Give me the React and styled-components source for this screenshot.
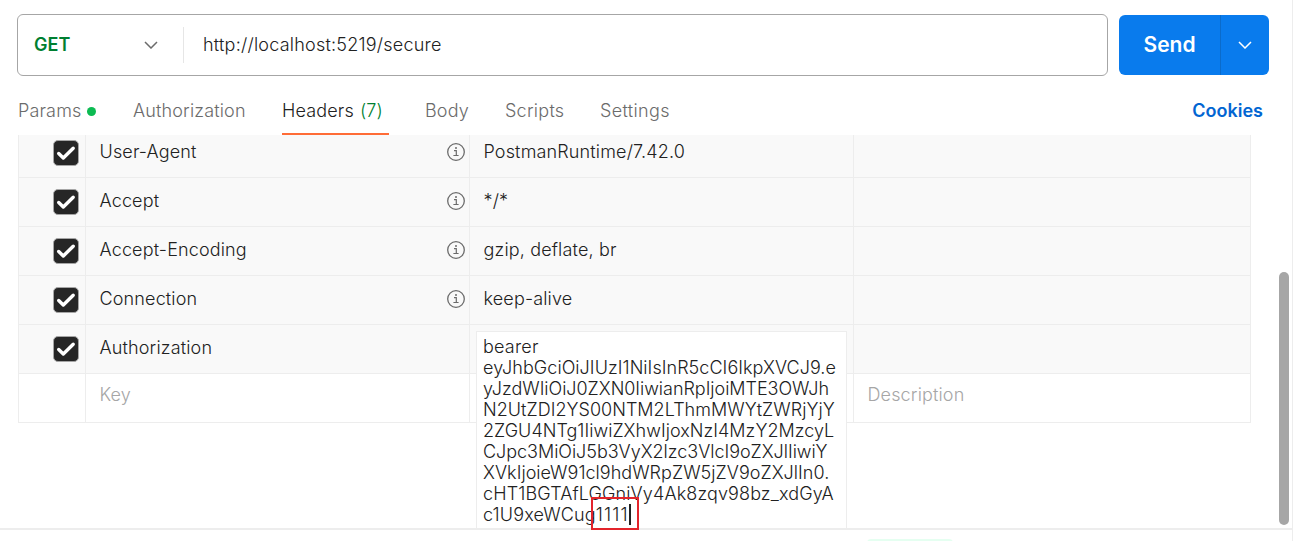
import React from "react";
import styled, { createGlobalStyle } from "styled-components";

const Global = createGlobalStyle`
  * { box-sizing: border-box; }
  body {
    margin: 0;
    background: #fff;
    color: #212121;
    font: 360 18px/24px Inter, "Liberation Sans", sans-serif;
    letter-spacing: 0.15px;
    overflow: hidden;
  }
`;

const Panel = styled.main`
  width: 1293px;
  height: 541px;
  display: flex;
  flex-direction: column;
  border-right: 1px solid #ededed;
  overflow: hidden;
`;

const RequestBar = styled.header`
  display: flex;
  align-items: center;
  gap: 11px;
  padding: 14px 23px 0 17px;
`;

const UrlBox = styled.div`
  display: flex;
  align-items: center;
  width: 1091px;
  height: 62px;
  border: 1px solid #a6a6a6;
  border-radius: 6px;
`;

const Method = styled.div`
  display: flex;
  align-items: center;
  justify-content: space-between;
  width: 166px;
  height: 36px;
  padding: 0 25px 0 16px;
  border-right: 1px solid #e6e6e6;
  color: #007f31;
  font-weight: 600;
  letter-spacing: 0;
`;

const Url = styled.span`
  padding-left: 19px;
  letter-spacing: 0.22px;
`;

const SendGroup = styled.div`
  display: flex;
  width: 150px;
  height: 60px;
  border-radius: 6px;
  background: #097bed;
  color: #fff;
  overflow: hidden;
`;

const SendButton = styled.div`
  display: flex;
  align-items: center;
  justify-content: center;
  width: 102px;
  border-right: 1px solid #0a6bcb;
  font-size: 21px;
  font-weight: 600;
  letter-spacing: 0;
`;

const SendMenu = styled.div`
  display: flex;
  flex: 1;
  align-items: center;
  justify-content: center;
`;

const Tabs = styled.nav`
  display: flex;
  height: 59px;
  flex: none;
  padding: 0 29px 0 18px;
`;

const Tab = styled.div`
  display: flex;
  align-items: center;
  gap: 6px;
  height: 59px;
  padding-top: 13px;
  margin-right: 36px;
  width: ${(p) => p.$width}px;
  white-space: nowrap;
  letter-spacing: ${(p) => p.$tracking ?? 0.15}px;
  color: ${(p) => (p.$active ? "#212121" : "#6b6b6b")};
  border-bottom: 2px solid ${(p) => (p.$active ? "#ff6c37" : "transparent")};
`;

const Count = styled.span`
  color: #007f31;
`;

const Dot = styled.i`
  width: 9px;
  height: 9px;
  border-radius: 50%;
  background: #0cbb52;
`;

const Cookies = styled.a`
  margin-left: auto;
  padding-top: 23px;
  color: #0265d2;
  font-weight: 600;
  letter-spacing: 0;
`;

const Viewport = styled.section`
  position: relative;
  height: 393px;
  flex: none;
  overflow: hidden;
`;

const Table = styled.div`
  width: 1233px;
  margin: -6px 0 0 18px;
  border-left: 1px solid #ededed;
`;

const Row = styled.div`
  display: grid;
  grid-template-columns: 67px 384px 384px 397px;
  height: 49px;
  background: ${(p) => (p.$blank ? "#fff" : "#f9f9f9")};
  color: ${(p) => (p.$blank ? "#a6a6a6" : "#212121")};
`;

const Cell = styled.div`
  display: flex;
  align-items: flex-start;
  justify-content: space-between;
  padding: ${(p) => p.$top || 11}px 4px 0 13.5px;
  border-right: 1px solid #ededed;
  border-bottom: 1px solid #ededed;
`;

const CheckCell = styled(Cell)`
  align-items: center;
  justify-content: flex-end;
  padding: 0 6px 0 0;
`;

const Editor = styled.div`
  position: absolute;
  left: 476px;
  top: 196px;
  width: 371px;
  height: 198px;
  padding: 4px 6px;
  background: #fff;
  border: 1px solid #ededed;
  line-height: 21px;
  white-space: nowrap;
`;

const TokenLine = styled.div`
  letter-spacing: ${(p) => p.$tracking}px;
`;

const Suffix = styled.span`
  letter-spacing: 1.2px;
`;

const Caret = styled.i`
  display: inline-block;
  width: 2px;
  height: 21px;
  vertical-align: top;
  background: #212121;
`;

const Marker = styled.div`
  position: absolute;
  left: 591px;
  top: 362px;
  width: 48px;
  height: 33px;
  border: 2px solid #e3242b;
`;

const Workspace = styled.div`
  position: relative;
`;

const ScrollThumb = styled.div`
  position: absolute;
  right: 3px;
  top: 137px;
  width: 10px;
  height: 253px;
  border-radius: 5px;
  background: #a6a6a6;
`;

const Response = styled.footer`
  height: 13px;
  border-top: 2px solid #ededed;
  padding: 9px 0 0 867px;
`;

const StatusBadge = styled.div`
  width: 86px;
  height: 24px;
  border-radius: 4px;
  background: #e5fff1;
`;

const Chevron = ({ color }) => (
  <svg width="14" height="8" viewBox="0 0 14 8" fill="none" stroke={color} strokeWidth="1.5">
    <path d="M1 1 7 7 13 1" />
  </svg>
);

const InfoIcon = styled.svg`
  margin-top: 3px;
`;

const Info = () => (
  <InfoIcon width="18" height="18" viewBox="0 0 18 18" fill="none">
    <circle cx="9" cy="9" r="8.3" stroke="#6b6b6b" strokeWidth="1.3" />
    <path d="M7 7.7h2.3V12.4M6.4 12.5h5.2" stroke="#6b6b6b" strokeWidth="1.2" />
    <circle cx="9" cy="5.1" r="1" fill="#6b6b6b" />
  </InfoIcon>
);

const Check = () => (
  <svg width="26" height="26" viewBox="0 0 26 26" fill="none">
    <rect x=".5" y=".5" width="25" height="25" rx="4.5" fill="#262626" stroke="#a6a6a6" />
    <path d="M5.7 13.5 10.3 18 20.2 8.3" stroke="#fff" strokeWidth="3.4" strokeLinecap="round" strokeLinejoin="round" />
  </svg>
);

const headers = [
  ["User-Agent", "PostmanRuntime/7.42.0"],
  ["Accept", "*/*"],
  ["Accept-Encoding", "gzip, deflate, br"],
  ["Connection", "keep-alive"],
  ["Authorization", null],
];

const token = [
  ["bearer", 0.2],
  ["eyJhbGciOiJIUzI1NiIsInR5cCI6IkpXVCJ9.e", 0.05],
  ["yJzdWIiOiJ0ZXN0IiwianRpIjoiMTE3OWJh", -0.03],
  ["N2UtZDI2YS00NTM2LThmMWYtZWRjYjY", 0.03],
  ["2ZGU4NTg1IiwiZXhwIjoxNzI4MzY2MzcyL", 0.03],
  ["CJpc3MiOiJ5b3VyX2lzc3VlcI9oZXJlIiwiY", -0.03],
  ["XVkIjoieW91cl9hdWRpZW5jZV9oZXJlIn0.", 0.03],
  ["cHT1BGTAfLGGniVy4Ak8zqv98bz_xdGyA", 0.12],
  ["c1U9xeWCug", 0.15],
];

export default function App() {
  return (
    <>
      <Global />
      <Panel>
        <RequestBar>
          <UrlBox>
            <Method>
              GET
              <Chevron color="#6b6b6b" />
            </Method>
            <Url>http://localhost:5219/secure</Url>
          </UrlBox>
          <SendGroup>
            <SendButton>Send</SendButton>
            <SendMenu>
              <Chevron color="#fff" />
            </SendMenu>
          </SendGroup>
        </RequestBar>
        <Tabs>
          <Tab $width={79}>
            Params <Dot />
          </Tab>
          <Tab $width={113}>Authorization</Tab>
          <Tab $width={107} $active>
            Headers <Count>(7)</Count>
          </Tab>
          <Tab $width={44}>Body</Tab>
          <Tab $width={59} $tracking={0.25}>Scripts</Tab>
          <Tab $width={70} $tracking={0.35}>Settings</Tab>
          <Cookies>Cookies</Cookies>
        </Tabs>
        <Workspace>
          <Viewport>
            <Table>
              {headers.map(([name, value]) => (
                <Row key={name}>
                  <CheckCell>
                    <Check />
                  </CheckCell>
                  <Cell>
                    {name}
                    {value && <Info />}
                  </Cell>
                  <Cell>{value}</Cell>
                  <Cell />
                </Row>
              ))}
              <Row $blank>
                <Cell />
                <Cell $top={9}>Key</Cell>
                <Cell />
                <Cell $top={9}>Description</Cell>
              </Row>
            </Table>
            <Editor>
              {token.map(([line, tracking], i) => (
                <TokenLine key={line} $tracking={tracking}>
                  {line}
                  {i === token.length - 1 && (
                    <>
                      <Suffix>1111</Suffix>
                      <Caret />
                    </>
                  )}
                </TokenLine>
              ))}
            </Editor>
            <ScrollThumb />
          </Viewport>
          <Marker />
        </Workspace>
        <Response>
          <StatusBadge />
        </Response>
      </Panel>
    </>
  );
}
